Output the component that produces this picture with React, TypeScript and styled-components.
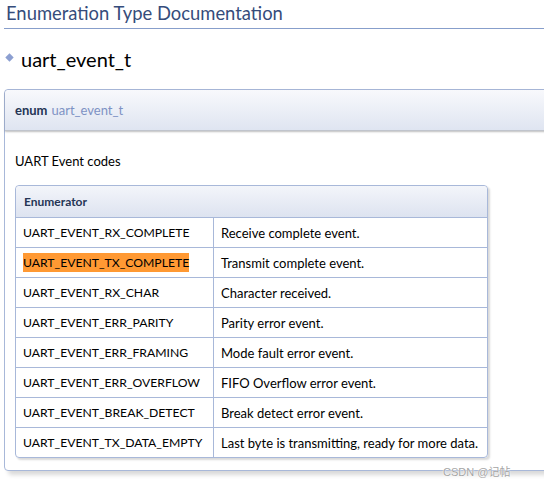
import React from "react";
import styled, { createGlobalStyle } from "styled-components";

const Global = createGlobalStyle`
  html, body { margin: 0; padding: 0; background: #ffffff; }
  body { font-family: Lato, "Noto Sans", sans-serif; color: #000; overflow: hidden; }
`;

const Page = styled.div`
  width: 544px;
  height: 484px;
  overflow: hidden;
  position: relative;
  padding: 0 0 0 4px;
  box-sizing: border-box;
`;

const GroupHeader = styled.h2`
  margin: 0;
  padding: 3px 0 5px 2px;
  font-size: 18.4px;
  font-weight: 400;
  line-height: 20px;
  color: #354c7b;
  border-bottom: 1px solid #879ecb;
`;

const MemTitle = styled.div`
  display: flex;
  align-items: center;
  gap: 8px;
  height: 60px;
  padding-left: 2px;
  font-size: 20px;
  color: #000;
`;

const Diamond = styled.span`
  width: 7px;
  height: 7px;
  background: #8c9fd1;
  transform: rotate(45deg) scale(0.85);
  margin-top: -4px;
`;

const MemItem = styled.div`
  margin-right: -20px;
  border: 1px solid #a8b8d9;
  border-radius: 4px 0 0 4px;
  box-shadow: 4px 4px 4px rgba(0, 0, 0, 0.15);
  height: 382px;
  box-sizing: border-box;
`;

const MemProto = styled.div`
  height: 41px;
  box-sizing: border-box;
  padding: 0 10px;
  display: flex;
  align-items: center;
  background: linear-gradient(#f8f9fc, #dfe5f1);
  border-bottom: 1px solid #c0c4cc;
  box-shadow: 0 1px 2px rgba(0, 0, 0, 0.25);
  border-radius: 4px 0 0 0;
  font-size: 13px;
`;

const Keyword = styled.b`
  color: #253555;
  font-weight: 700;
  margin-right: 4px;
`;

const ProtoName = styled.span`
  color: #7e92c4;
`;

const MemDoc = styled.div`
  padding: 22px 10px 0 10px;
  font-size: 13px;
`;

const Para = styled.p`
  margin: 0 0 16px 0;
  line-height: 16px;
`;

const FieldTable = styled.table`
  border-collapse: separate;
  border-spacing: 0;
  border: 1px solid #a8b8d9;
  border-radius: 4px;
  box-shadow: 2px 2px 2px rgba(0, 0, 0, 0.15);
  width: 473px;
`;

const HeadCell = styled.th`
  text-align: left;
  height: 31px;
  padding: 0 8px;
  font-weight: 700;
  font-size: 12px;
  color: #253555;
  background: linear-gradient(#f3f5fa, #dde3f0);
  border-bottom: 1px solid #a8b8d9;
  border-radius: 4px 4px 0 0;
`;

const NameCell = styled.td<{ $last: boolean }>`
  height: 29px;
  padding: 0 7px;
  font-size: 12.2px;
  white-space: nowrap;
  border-right: 1px solid #a8b8d9;
  border-bottom: ${(p) => (p.$last ? "none" : "1px solid #a8b8d9")};
  width: 183px;
`;

const DescCell = styled.td<{ $last: boolean }>`
  height: 29px;
  padding: 0 7px;
  font-size: 13px;
  white-space: nowrap;
  border-bottom: ${(p) => (p.$last ? "none" : "1px solid #a8b8d9")};
`;

const Highlight = styled.span`
  background: #ff9933;
  padding: 2px 0;
`;

const Watermark = styled.div`
  position: absolute;
  left: 443px;
  top: 463px;
  font-family: "Liberation Sans", "Noto Sans CJK SC", sans-serif;
  font-size: 11px;
  color: #a5a5a5;
  text-shadow: 0 0 1px #fff, 0 0 2px #fff;
`;

const rows: [string, string, boolean?][] = [
  ["UART_EVENT_RX_COMPLETE", "Receive complete event."],
  ["UART_EVENT_TX_COMPLETE", "Transmit complete event.", true],
  ["UART_EVENT_RX_CHAR", "Character received."],
  ["UART_EVENT_ERR_PARITY", "Parity error event."],
  ["UART_EVENT_ERR_FRAMING", "Mode fault error event."],
  ["UART_EVENT_ERR_OVERFLOW", "FIFO Overflow error event."],
  ["UART_EVENT_BREAK_DETECT", "Break detect error event."],
  ["UART_EVENT_TX_DATA_EMPTY", "Last byte is transmitting, ready for more data."],
];

export default function App() {
  return (
    <Page>
      <Global />
      <GroupHeader>Enumeration Type Documentation</GroupHeader>
      <MemTitle>
        <Diamond />
        uart_event_t
      </MemTitle>
      <MemItem>
        <MemProto>
          <Keyword>enum</Keyword>
          <ProtoName>uart_event_t</ProtoName>
        </MemProto>
        <MemDoc>
          <Para>UART Event codes</Para>
          <FieldTable>
            <thead>
              <tr>
                <HeadCell colSpan={2}>Enumerator</HeadCell>
              </tr>
            </thead>
            <tbody>
              {rows.map(([n, d, hl], i) => {
                const last = i === rows.length - 1;
                return (
                  <tr key={n}>
                    <NameCell $last={last}>{hl ? <Highlight>{n}</Highlight> : n}</NameCell>
                    <DescCell $last={last}>{d}</DescCell>
                  </tr>
                );
              })}
            </tbody>
          </FieldTable>
        </MemDoc>
      </MemItem>
      <Watermark>CSDN @记帖</Watermark>
    </Page>
  );
}
